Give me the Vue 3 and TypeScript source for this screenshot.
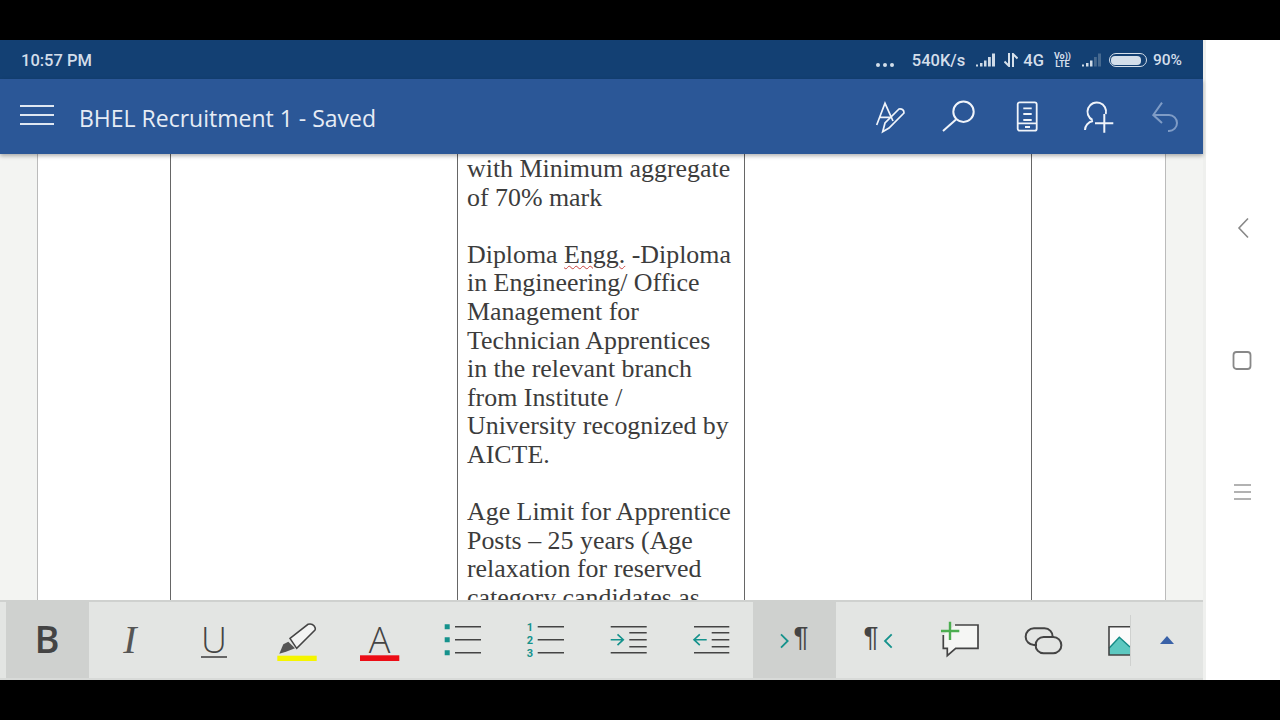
<script setup lang="ts">
// lines of the visible table cell, blank strings are empty paragraphs
const lines: string[] = [
  'with Minimum aggregate',
  'of 70% mark',
  '',
  'Diploma |Engg.| -Diploma',
  'in Engineering/ Office',
  'Management for',
  'Technician Apprentices',
  'in the relevant branch',
  'from Institute /',
  'University recognized by',
  'AICTE.',
  '',
  'Age Limit for Apprentice',
  'Posts – 25 years (Age',
  'relaxation for reserved',
  'category candidates as',
]

const parts = (line: string) => line.split('|')
</script>

<template>
  <div class="screen">
    <div class="phone">
      <div class="status">
        <span class="time">10:57 PM</span>
        <div class="status-right">
          <span class="dots"><i></i><i></i><i></i></span>
          <span class="speed">540K/s</span>
          <svg class="sig1" width="19" height="14" viewBox="0 0 19 14">
            <path d="M0 11.500h2v2H0zM4 10h2.500v3.500H4zM8 7.500h2.500v6H8zM12 4h2.800v9.500H12zM16 .5h3v13h-3z" fill="#cfdbe8" />
          </svg>
          <svg class="arrows" width="14" height="14" viewBox="0 0 14 14">
            <path d="M5 0v13L.5 8.500M9 14V1l4.500 4.500" fill="none" stroke="#d5e0ea" stroke-width="2" />
          </svg>
          <span class="net">4G</span>
          <span class="volte"><b>Vo))</b><b>LTE</b></span>
          <svg class="sig2" width="19" height="14" viewBox="0 0 19 14">
            <path d="M0 11.500h2v2H0zM4 10h2.500v3.500H4zM8 7.500h2.500v6H8z" fill="#cfdbe8" />
            <path d="M12 4h2.800v9.500H12zM16 .5h3v13h-3z" fill="#46698f" />
          </svg>
          <span class="battery"><span class="level"></span></span>
          <span class="pct">90%</span>
        </div>
      </div>

      <header class="titlebar">
        <span class="burger"><i></i><i></i><i></i></span>
        <span class="doc-title">BHEL Recruitment 1 - Saved</span>
        <div class="title-icons">
          <svg class="ic-font" width="34" height="34" viewBox="0 0 34 34" fill="none" stroke="#f0f4fa" stroke-width="1.700">
            <path d="M2.700 25 11 3.300 19 21M6 17.300h10" />
            <path d="M8.700 31.700 11 23 25 9q5-.5 5 4L15 28Z" />
          </svg>
          <svg class="ic-search" width="36" height="34" viewBox="0 0 36 34" fill="none" stroke="#f0f4fa" stroke-width="2">
            <circle cx="23.500" cy="11.700" r="10.200" />
            <path d="M16 19.500 3 31" />
          </svg>
          <svg class="ic-device" width="24" height="34" viewBox="0 0 24 34" fill="none" stroke="#f0f4fa" stroke-width="1.800">
            <rect x="2.700" y="2.300" width="19" height="28.400" rx="2" />
            <path d="M8.300 8.300h8.400M8.300 14h8.400M8.300 20h8.400M2.700 23.300h19M10 27h5" />
          </svg>
          <svg class="ic-person" width="32" height="34" viewBox="0 0 32 34" fill="none" stroke="#f0f4fa" stroke-width="2">
            <path d="M9.500 20A9.300 9.300 0 1 1 22.800 14M2 30c0-4 3-8 8-9" />
            <path d="M12 23.300h18.300M21.300 14v18.700" />
          </svg>
          <svg class="ic-undo" width="32" height="34" viewBox="0 0 32 34" fill="none" stroke="#7f9cc6" stroke-width="2">
            <path d="M12 2.700 3.300 15l8.700 8M3.300 15H19a8 8 0 0 1 0 16h-1" />
          </svg>
        </div>
      </header>

      <main class="doc">
        <div class="margin"></div>
        <div class="cell edge"></div>
        <div class="cell"></div>
        <div class="cell text">
          <p v-for="(line, i) in lines" :key="i" class="line">
            <template v-for="(part, j) in parts(line)" :key="j">
              <span :class="{ spell: j === 1 }">{{ part }}</span>
            </template>
          </p>
        </div>
        <div class="cell"></div>
        <div class="cell"></div>
        <div class="margin edge"></div>
      </main>

      <footer class="toolbar">
        <div class="tool active">
          <svg width="83" height="76"><text x="41" y="51" class="t-b">B</text></svg>
        </div>
        <div class="tool">
          <svg width="83" height="76"><text x="41" y="51" class="t-i">I</text></svg>
        </div>
        <div class="tool">
          <svg width="83" height="76">
            <text x="42" y="51" class="t-a">U</text>
            <path d="M29 55h26" stroke="#666" stroke-width="2" />
          </svg>
        </div>
        <div class="tool">
          <svg width="83" height="76">
            <path d="M35 36.300 53 22.300q4-1 6 1.500t1 4.200L41.700 46.300Z" fill="#f3f4f3" stroke="#444" stroke-width="1.500" />
            <path d="M33.300 39.700 40 46.300l-9 3.400-6.700 2 4-9.400Z" fill="#555" />
            <rect x="22.300" y="53.700" width="39.400" height="5.300" fill="#f5f500" />
          </svg>
        </div>
        <div class="tool">
          <svg width="83" height="76">
            <text x="41.500" y="51" class="t-a">A</text>
            <rect x="22" y="53.300" width="39.300" height="5.700" fill="#ec0d16" />
          </svg>
        </div>
        <div class="tool">
          <svg width="83" height="76">
            <path d="M23.700 22.200h5v5h-5zM23.700 35.200h5v5h-5zM23.700 48.200h5v5h-5z" fill="#15928c" />
            <path d="M34 24.700h26M34 37.700h26M34 50.700h26" stroke="#444" stroke-width="1.500" />
          </svg>
        </div>
        <div class="tool">
          <svg width="83" height="76">
            <text x="26" y="28.500" class="t-n">1</text>
            <text x="26" y="41.500" class="t-n">2</text>
            <text x="26" y="54.500" class="t-n">3</text>
            <path d="M33.700 24.700H60M33.700 37.700H60M33.700 50.700H60" stroke="#444" stroke-width="1.500" />
          </svg>
        </div>
        <div class="tool">
          <svg width="83" height="76" fill="none">
            <path d="M23.700 24.700h36M42.300 30.700h17.400M42.300 37.700h17.400M42.300 44.700h17.400M23.700 50.700h36" stroke="#444" stroke-width="1.500" />
            <path d="M23.700 37.700h12.600M30.500 32.300l5.800 5.400-5.800 5.400" stroke="#15928c" stroke-width="1.600" />
          </svg>
        </div>
        <div class="tool">
          <svg width="83" height="76" fill="none">
            <path d="M24 24.700h35.300M41.700 30.700h17.600M41.700 37.700h17.600M41.700 44.700h17.600M24 50.700h35.300" stroke="#444" stroke-width="1.500" />
            <path d="M36.700 37.700H24M29.800 32.300 24 37.700l5.800 5.400" stroke="#15928c" stroke-width="1.600" />
          </svg>
        </div>
        <div class="tool active">
          <svg width="83" height="76">
            <path d="M28 32.300 34.700 39 28 45.700" fill="none" stroke="#15928c" stroke-width="1.800" />
            <text x="48" y="44" class="t-p">¶</text>
          </svg>
        </div>
        <div class="tool">
          <svg width="83" height="76">
            <text x="35" y="44" class="t-p">¶</text>
            <path d="M55.700 32.300 49 39l6.700 6.700" fill="none" stroke="#15928c" stroke-width="1.800" />
          </svg>
        </div>
        <div class="tool">
          <svg width="83" height="76">
            <path d="M24.300 33v13.300h4v7.400l8.400-7.400H59V23H36" fill="#f5f6f4" stroke="#444" stroke-width="1.700" />
            <path d="M22 29h18.300M31 19.700V38" stroke="#4cae50" stroke-width="2.400" />
          </svg>
        </div>
        <div class="tool">
          <svg width="83" height="76" fill="none" stroke="#444" stroke-width="2">
            <path d="M35 43h-3a8.300 8.300 0 0 1 0-16.700h10.500a8.300 8.300 0 0 1 8.200 8.700" />
            <path d="M48.500 35h2.700a8.100 8.100 0 0 1 0 16.300H41.600a8.100 8.100 0 0 1-8-8.300 8 8 0 0 1 8-8h7" />
          </svg>
        </div>
        <div class="tool tool-img">
          <svg width="46" height="76">
            <rect x="24" y="24.700" width="21" height="28.300" fill="#fbfbfb" />
            <path d="M24 46.300 34.300 35.300 45 45v8H24Z" fill="#5cc8c0" />
            <path d="M24 46.300 34.300 35.300 45 45" fill="none" stroke="#148a85" stroke-width="1.400" />
            <path d="M45 24.700H24V53h21" fill="none" stroke="#444" stroke-width="1.600" />
          </svg>
          <span class="tool-sep"></span>
        </div>
        <div class="tool tool-caret"><span class="caret"></span></div>
      </footer>
    </div>

    <nav class="softkeys">
      <svg width="24" height="24" viewBox="0 0 24 24" fill="none" stroke="#888" stroke-width="1.600">
        <path d="M18 2.500 9 12l9 9.500" />
      </svg>
      <svg width="24" height="24" viewBox="0 0 24 24" fill="none" stroke="#888" stroke-width="1.800">
        <rect x="3.500" y="4" width="17" height="17" rx="3" />
      </svg>
      <svg width="24" height="24" viewBox="0 0 24 24" fill="none" stroke="#999" stroke-width="1.400">
        <path d="M4 5h17M4 12h17M4 19h17" />
      </svg>
    </nav>
  </div>
</template>

<style scoped>
.screen {
  width: 1280px;
  height: 720px;
  box-sizing: border-box;
  padding: 40px 0;
  background: #000;
  display: flex;
  overflow: hidden;
}

.phone {
  width: 1203px;
  display: flex;
  flex-direction: column;
}

.status {
  height: 39px;
  box-sizing: border-box;
  background: #134073;
  color: #d3deea;
  display: flex;
  align-items: center;
  justify-content: space-between;
  padding: 1px 21px 0;
  font-family: Roboto, "Liberation Sans", sans-serif;
  font-weight: 500;
  font-size: 16.500px;
}

.status-right {
  display: flex;
  align-items: center;
}

.dots {
  display: flex;
  gap: 3px;
  margin-top: 9px;
}

.dots i {
  width: 4px;
  height: 4px;
  border-radius: 50%;
  background: #d3deea;
}

.speed {
  margin-left: 18px;
}

.sig1 {
  margin-left: 11px;
}

.arrows {
  margin-left: 9px;
}

.net {
  margin-left: 5px;
}

.volte {
  margin-left: 10px;
  display: flex;
  flex-direction: column;
  align-items: center;
  font-size: 9px;
  line-height: 8px;
}

.sig2 {
  margin-left: 11px;
}

.battery {
  margin-left: 8px;
  width: 38px;
  height: 14px;
  box-sizing: border-box;
  border: 1.500px solid #d3deea;
  border-radius: 7px;
  padding: 1.500px;
  display: flex;
}

.level {
  width: 90%;
  background: #d3deea;
  border-radius: 4px;
}

.pct {
  margin-left: 6px;
  font-size: 15.500px;
}

.titlebar {
  height: 75px;
  background: #2b5797;
  display: flex;
  align-items: center;
  position: relative;
  z-index: 2;
  box-shadow: 0 2px 4px rgba(0, 0, 0, 0.3);
}

.burger {
  margin: 0 0 3px 20px;
  width: 34px;
  display: flex;
  flex-direction: column;
  gap: 7px;
}

.burger i {
  height: 2px;
  background: #dfe7f2;
}

.doc-title {
  margin: 2px 0 0 25px;
  font-family: "Open Sans", sans-serif;
  font-size: 23px;
  color: #e6ecf5;
}

.title-icons {
  margin-left: auto;
  display: flex;
  align-items: center;
  height: 34px;
}

.ic-font {
  margin-right: 32px;
}

.ic-search {
  margin-right: 39px;
}

.ic-device {
  margin-right: 44px;
}

.ic-person {
  margin-right: 35px;
}

.ic-undo {
  margin-right: 21px;
}

.doc {
  height: 446px;
  display: grid;
  grid-template-columns: 37px 133px 287px 287px 287px 134px 38px;
  background: #fff;
  overflow: hidden;
}

.margin {
  background: #f3f4f2;
}

.cell {
  box-sizing: border-box;
  border-left: 1px solid #666;
}

.edge {
  border-left: 1px solid #bbb;
}

.text {
  padding: 1px 0 0 9px;
  font-family: "Liberation Serif", serif;
  font-size: 25.900px;
  color: #3c3c3c;
}

.line {
  margin: 0;
  height: 28.600px;
  line-height: 28.600px;
  white-space: nowrap;
}

.spell {
  text-decoration: underline wavy #c8433f 1px;
  text-underline-offset: 2px;
}

.toolbar {
  height: 80px;
  box-sizing: border-box;
  background: #e3e5e3;
  border-top: 2px solid #cfd1cf;
  border-bottom: 2px solid #d8dad8;
  padding-left: 6px;
  display: flex;
}

.tool {
  width: 83px;
  height: 76px;
  flex: none;
}

.tool svg {
  display: block;
}

.active {
  background: #cfd1cf;
}

.tool-img {
  width: 46px;
  display: flex;
  align-items: center;
  position: relative;
}

.tool-sep {
  position: absolute;
  right: 0;
  top: 13px;
  width: 1px;
  height: 51px;
  background: #cfd1cf;
}

.tool-caret {
  width: 72px;
  display: flex;
  align-items: center;
  justify-content: center;
}

.caret {
  width: 0;
  height: 0;
  border-left: 7px solid transparent;
  border-right: 7px solid transparent;
  border-bottom: 8px solid #3a62a8;
}

.t-b,
.t-i,
.t-a,
.t-n,
.t-p {
  text-anchor: middle;
}

.t-b {
  font-family: "Open Sans", sans-serif;
  font-weight: 600;
  font-size: 38px;
  fill: #444;
}

.t-i {
  font-family: "Liberation Serif", serif;
  font-style: italic;
  font-size: 40px;
  fill: #555;
}

.t-a {
  font-family: "Open Sans", sans-serif;
  font-weight: 300;
  font-size: 36px;
  fill: #444;
}

.t-n {
  font-family: Roboto, sans-serif;
  font-weight: 700;
  font-size: 11px;
  fill: #15928c;
}

.t-p {
  font-family: "Liberation Sans", sans-serif;
  font-size: 28px;
  fill: #444;
}

.softkeys {
  width: 77px;
  box-sizing: border-box;
  background: #fff;
  border-left: 3px solid #eff0ee;
  padding: 176px 3px 0 0;
  display: flex;
  flex-direction: column;
  align-items: center;
  gap: 108px;
}
</style>
